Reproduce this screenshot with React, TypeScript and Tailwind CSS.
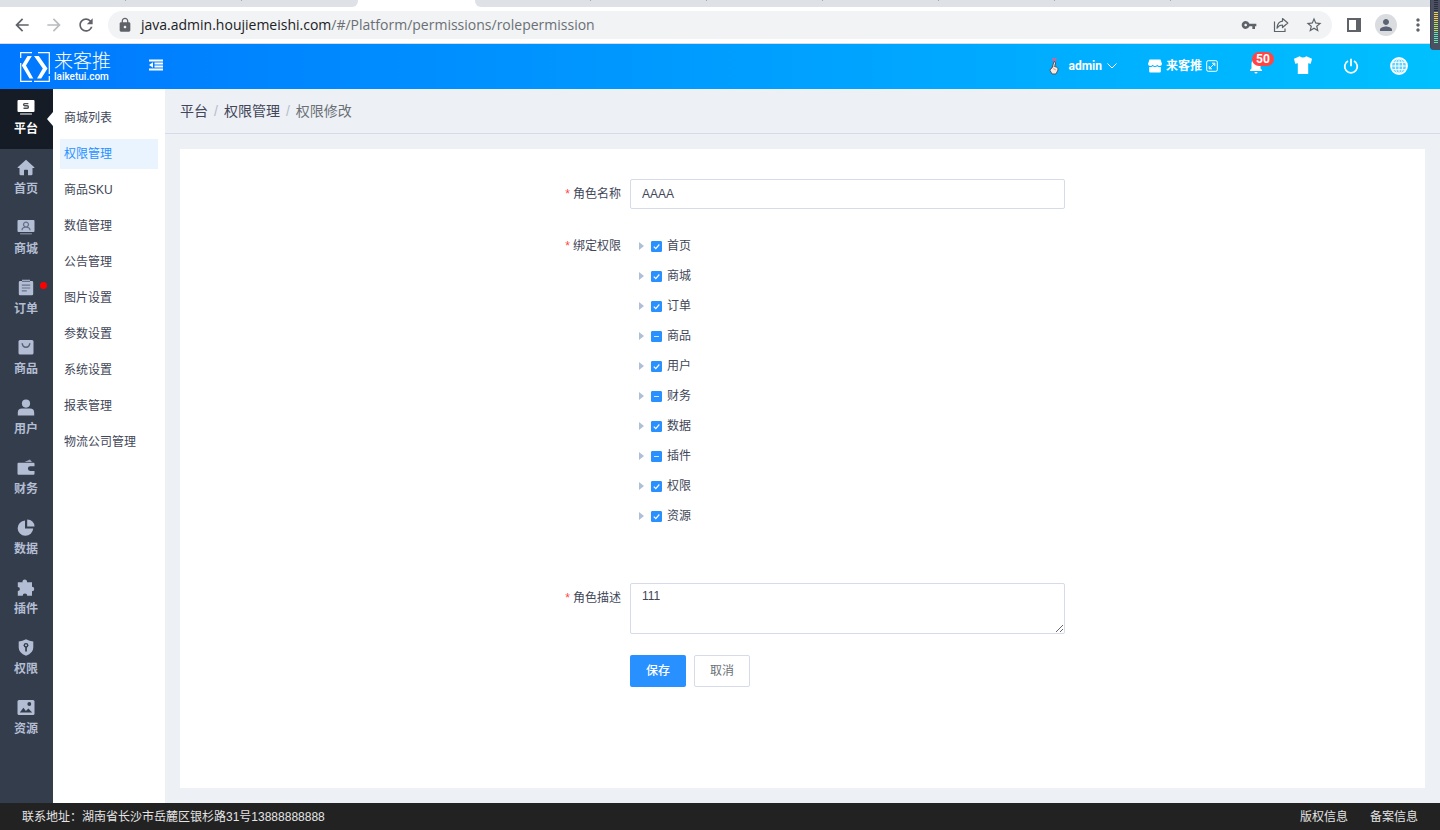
import { useEffect, useRef, useState } from "react";
import type { ReactNode } from "react";
import {
  MdArrowBack,
  MdArrowForward,
  MdLock,
  MdMoreVert,
  MdPerson,
  MdRefresh,
  MdStarBorder,
  MdVpnKey,
} from "react-icons/md";

type NavItem = { label: string; icon: ReactNode; dot?: boolean };

const hole = "fill-[#343d4c]";

const navItems: NavItem[] = [
  {
    label: "平台",
    icon: (
      <>
        <rect x="0.5" y="1" width="17" height="12" rx="1" />
        <rect x="3" y="14" width="12" height="2" rx="0.5" opacity="0.5" />
        <path
          d="M11.4 4.6H7.6q-1 0-1 1t1 1.1h2.6q1.2 0 1.2 1.2T10.2 9.200H6.500"
          fill="none"
          stroke="#4a4f57"
          strokeWidth="1.4"
        />
      </>
    ),
  },
  {
    label: "首页",
    icon: <path d="M9 .8 17.300 8.200q.5.8-.5.900H15.500V15q0 1.300-1.300 1.300H11V11.500q0-.8-.8-.8H7.800q-.8 0-.8.8v4.800H3.800Q2.500 16.300 2.500 15V9.100H1.200Q.2 9 .7 8.200Z" />,
  },
  {
    label: "商城",
    icon: (
      <>
        <rect x="0.5" y="1" width="17" height="12" rx="1" />
        <rect x="3" y="14" width="12" height="1.500" rx="0.5" opacity="0.5" />
        <path
          d="M5 11.200Q5.200 8.200 9 8.200t4 3M6.500 5.500a2.500 2.300 0 1 1 5 0a2.500 2.300 0 1 1-5 0"
          fill="none"
          stroke="#657086"
          strokeWidth="1.300"
        />
      </>
    ),
  },
  {
    label: "订单",
    dot: true,
    icon: (
      <>
        <path d="M3 2h2V.8h8V2h2q1.200 0 1.200 1.200V15q0 1.200-1.200 1.200H3Q1.800 16.200 1.800 15V3.200Q1.800 2 3 2Z" />
        <path d="M5 2.400h8M4.800 6.200h8.400M4.800 9h8.400M4.800 11.800h5" fill="none" stroke="#667188" strokeWidth="1.200" />
      </>
    ),
  },
  {
    label: "商品",
    icon: (
      <>
        <rect x="1.500" y="1" width="15" height="14.500" rx="1.500" />
        <path d="M5.200 4.200q.4 4 3.800 4t3.800-4" fill="none" stroke="#566075" strokeWidth="1.500" />
      </>
    ),
  },
  {
    label: "用户",
    icon: (
      <>
        <circle cx="9" cy="4.600" r="4.100" />
        <path d="M.8 16.500v-2.800Q.8 9.500 5 9.500h8q4.200 0 4.200 4.200v2.800Z" />
      </>
    ),
  },
  {
    label: "财务",
    icon: (
      <>
        <path d="M7.500 3 13 .5 15 3Z" opacity="0.8" />
        <path d="M1.500 3.700h15q1 0 1 1v2.600h-4.300a2.300 2.300 0 0 0 0 4.600h4.300v2.800q0 1-1 1h-15q-1 0-1-1v-10q0-1 1-1Z" />
      </>
    ),
  },
  {
    label: "数据",
    icon: (
      <>
        <path d="M8 1.500V9.500h8.200A7.800 7.600 0 1 1 8 1.500Z" />
        <path d="M10.200.5q6.800.4 7.300 6.900h-7.300Z" />
      </>
    ),
  },
  {
    label: "插件",
    icon: <path d="M.8 3.200h4.700a2.300 2.300 0 1 1 4.500 0h5v4.500a2.100 2.100 0 1 1 0 4.500v4.500h-4.800a2.200 2.200 0 1 0-4.500 0H.8v-4.600a2.100 2.100 0 1 0 0-4.200Z" />,
  },
  {
    label: "权限",
    icon: (
      <>
        <path d="M9 .3q3.500 2 7.300 2.200v6q0 5.500-7.300 8.300Q1.700 14 1.700 8.500v-6Q5.500 2.300 9 .3Z" />
        <circle cx="9" cy="6.300" r="2.400" className={hole} />
        <path d="M8.200 8h1.700v4.500H8.200Z" className={hole} />
        <circle cx="9" cy="6.300" r="1" />
      </>
    ),
  },
  {
    label: "资源",
    icon: (
      <>
        <rect x="0.500" y="1" width="17" height="15" rx="1.500" />
        <circle cx="12.300" cy="5" r="1.900" className={hole} />
        <path d="m2.800 13.500 3.600-4.800 2.500 3.300 2.500-2.500 3.800 4Z" className={hole} />
      </>
    ),
  },
];

const subMenu = [
  "商城列表",
  "权限管理",
  "商品SKU",
  "数值管理",
  "公告管理",
  "图片设置",
  "参数设置",
  "系统设置",
  "报表管理",
  "物流公司管理",
];

const permissions = [
  { label: "首页", partial: false },
  { label: "商城", partial: false },
  { label: "订单", partial: false },
  { label: "商品", partial: true },
  { label: "用户", partial: false },
  { label: "财务", partial: true },
  { label: "数据", partial: false },
  { label: "插件", partial: true },
  { label: "权限", partial: false },
  { label: "资源", partial: false },
];

function BrowserBar() {
  return (
    <div className="relative bg-white border-b border-[#dadce0]">
      <div className="flex h-[7px] overflow-hidden bg-white">
        <div className="flex w-[358px] shrink-0 rounded-br-md bg-[#dee1e6] pl-[10px]">
          {[0, 1, 2].map((i) => (
            <span key={i} className={`h-px w-[116px] ${i < 2 ? "border-r border-[#a5a9ae]" : ""}`} />
          ))}
        </div>
        <div className="w-[117px] shrink-0" />
        <div className="flex flex-1 rounded-bl-md bg-[#dee1e6]">
          {[0, 1, 2, 3, 4, 5].map((i) => (
            <span key={i} className="h-px w-[116px] border-r border-[#a5a9ae]" />
          ))}
        </div>
      </div>
      <div className="flex h-9 items-center pl-3 pr-4 text-[#5f6368]">
        <button aria-label="后退" className="mr-3"><MdArrowBack className="size-5" /></button>
        <button aria-label="前进" className="mr-3 text-[#babcbe]"><MdArrowForward className="size-5" /></button>
        <button aria-label="刷新" className="mr-3"><MdRefresh className="size-5" /></button>
        <div className="flex h-7 flex-1 items-center rounded-full bg-[#f1f3f4] px-[9px]">
          <MdLock className="mr-2 size-4" />
          <span className="flex-1 font-['Open_Sans',sans-serif] text-sm text-[#6b6f74]">
            <span className="text-[#202124]">java.admin.houjiemeishi.com</span>
            /#/Platform/permissions/rolepermission
          </span>
          <button aria-label="密码" className="mr-4"><MdVpnKey className="size-4" /></button>
          <button aria-label="分享" className="mr-4">
            <svg viewBox="0 0 16 16" className="size-4" fill="none" stroke="currentColor" strokeWidth="1.200">
              <path d="M1.500 4.500v10h10.500V11.500" />
              <path d="M9.500 1.500 14.800 6 9.500 10.500V8Q6 8 4 11.200 4.500 4.700 9.500 4.200Z" strokeLinejoin="round" />
            </svg>
          </button>
          <button aria-label="收藏"><MdStarBorder className="size-[18px]" /></button>
        </div>
        <button aria-label="侧边栏" className="ml-[15px] mr-[14px]">
          <svg viewBox="0 0 14 14" className="size-[14px]">
            <path d="M1 1h12v12H1Z" fill="none" stroke="currentColor" strokeWidth="2" />
            <path d="M9 0h5v14H9Z" fill="currentColor" />
          </svg>
        </button>
        <button aria-label="用户" className="mr-[11px] flex size-[22px] items-center justify-center rounded-full bg-[#dadce0] text-[#5a6375]">
          <MdPerson className="size-[18px]" />
        </button>
        <button aria-label="更多" className="-mr-1"><MdMoreVert className="size-5" /></button>
      </div>
      <div className="absolute right-0 top-0 z-20 flex h-[50px] w-[10px] flex-col items-end gap-px overflow-hidden rounded-bl border-l border-[#3f4453] bg-[#4b5163] pr-[2px]">
        {Array.from({ length: 22 }, (_, i) => (
          <span
            key={i}
            className={`h-px w-1 shrink-0 ${
              i < 6 ? "bg-[#2b2e3a]" : i < 11 ? "bg-[#f2cf47]" : i < 16 ? "bg-[#b5e05c]" : "bg-[#5fe6b0]"
            }`}
          />
        ))}
      </div>
    </div>
  );
}

function Logo() {
  return (
    <div className="flex items-center gap-1">
      <svg viewBox="0 0 30 30" className="size-[30px]" fill="none" stroke="white">
        <path d="M12 .7H.7V6M.7 11v18.300H12M14 29.300h15.300V24M29.300 22V.7H18" strokeWidth="1.200" />
        <path d="M11.800 4H7.500L1.800 13.500 9.500 26.500h3.800L6 13.500Z" fill="white" stroke="none" />
        <path d="M14 4h4.800l8.700 12.500-6.300 10H17l5.800-10Z" fill="white" stroke="none" />
      </svg>
      <div className="flex flex-col">
        <span className="text-[19px] font-light leading-5">来客推</span>
        <span className="font-['Roboto',sans-serif] text-[10px] font-medium leading-[10px]">laiketui.com</span>
      </div>
    </div>
  );
}

function Header() {
  return (
    <header className="flex h-[45px] items-center bg-gradient-to-r from-[#0077ff] to-[#00c0ff] pl-5 pr-8 text-white">
      <Logo />
      <button aria-label="折叠菜单" className="mb-1 ml-[38px]">
        <svg viewBox="0 0 14 12" className="h-3 w-[14px]" fill="currentColor">
          <path d="M0 .5h14v2H0ZM5.500 3.500H14v2H5.500ZM5.500 6.500H14v2H5.500ZM0 9.500h14v2H0ZM0 6l4-2.700v5.400Z" />
        </svg>
      </button>
      <div className="mb-px ml-auto flex items-center gap-[31px] font-['Roboto','Noto_Sans_CJK_SC',sans-serif] text-xs font-bold">
        <button className="flex items-center">
          <svg viewBox="0 0 12 18" className="mr-[9px] h-[18px] w-3">
            <path d="M4 1.500q1.500-1.500 2.500 0Q8 0 8.800 1.800 8.500 4 6.500 5 4 3.800 4 1.500Z" fill="#c06aa0" />
            <path d="M6 4.500q2 .2 1.500 2.500l-1 2.500q4 .5 3.500 3.500L8 17H4l-2-3.500q0-2 2-2.500Z" fill="#f7eade" stroke="#49586d" strokeWidth="1" />
            <path d="m5 11.500 3 1.500M5.500 10l1-3" stroke="#d39b7c" strokeWidth="0.800" />
          </svg>
          admin
          <svg viewBox="0 0 10 6" className="ml-[5px] h-[6px] w-[10px]" fill="none" stroke="currentColor">
            <path d="m.5.5 4.500 4.500L9.500.5" />
          </svg>
        </button>
        <a href="#/shop" className="flex items-center">
          <svg viewBox="0 0 14 14" className="mr-1 size-[14px]" fill="currentColor">
            <path d="M1.500.5h11L14 5q-.3 2-2.300 2Q10 7 9.300 5.700 8.500 7 7 7T4.700 5.700Q4 7 2.300 7 .3 7 0 5Z" />
            <path d="M1.200 8q2 .3 3.400-.8Q7 8.800 9.400 7.200q1.400 1.100 3.400.8v4.500q0 1-1 1H2.200q-1 0-1-1Z" />
          </svg>
          来客推
          <svg viewBox="0 0 12 12" className="ml-1 size-3" fill="none" stroke="currentColor">
            <rect x="0.700" y="0.700" width="10.600" height="10.600" rx="1.500" />
            <path d="M3.200 8.800 8.800 3.200M6 3.200h2.800V6M3.200 6v2.800H6" />
          </svg>
        </a>
        <button aria-label="消息" className="relative">
          <svg viewBox="0 0 14 16" className="h-4 w-[14px]" fill="currentColor">
            <path d="M7 1q4.500.5 4.500 5v4.500L13 12v1H1v-1l1.500-1.500V6Q2.500 1.500 7 1ZM5.500 14h3q0 1.500-1.500 1.500T5.500 14Z" />
          </svg>
          <span className="absolute -top-[6px] left-[3px] h-[14px] rounded-full bg-[#ff4645] px-1 text-xs leading-[14px]">50</span>
        </button>
        <button aria-label="主题">
          <svg viewBox="0 0 18 18" className="mb-[3px] size-[18px]" fill="currentColor">
            <path d="M5.700.3q3.300 2.500 6.600 0L18 2.800l-1.200 5-2.600-.5V18H3.800V7.300l-2.600.5L0 2.800Z" />
          </svg>
        </button>
        <button aria-label="退出">
          <svg viewBox="0 0 16 16" className="size-4" fill="none" stroke="currentColor" strokeWidth="1.800">
            <path d="M5 3A6.300 6.300 0 1 0 11 3M8 .8v7.400" />
          </svg>
        </button>
        <button aria-label="语言">
          <svg viewBox="0 0 18 18" className="size-[18px]" fill="none" stroke="white">
            <circle cx="9" cy="9" r="8" fill="#5fd2ff" strokeWidth="1.800" />
            <ellipse cx="9" cy="9" rx="3.800" ry="7.500" />
            <path d="M9 1v16M1.500 9h15M2.800 5.300h12.400M2.800 12.700h12.400" />
          </svg>
        </button>
      </div>
    </header>
  );
}

function Sidebar() {
  return (
    <nav className="w-[53px] shrink-0 bg-[#343d4c]">
      {navItems.map((item, i) => (
        <a
          key={item.label}
          href={`#/${i}`}
          className={`relative flex h-[60px] flex-col items-center gap-1 pr-px pt-[10px] text-xs font-bold leading-[18px] ${
            i === 0 ? "bg-[#161c25] text-white" : "text-[#b3bdd3]"
          }`}
        >
          <svg viewBox="0 0 18 17" className="h-[17px] w-[18px]" fill="currentColor">
            {item.icon}
          </svg>
          {item.label}
          {item.dot && <span className="absolute right-[6px] top-[13px] size-[7px] rounded-full bg-[#ff0000]" />}
          {i === 0 && (
            <svg viewBox="0 0 6 14" className="absolute right-0 top-[23px] h-[14px] w-[6px]" fill="white">
              <path d="M6 0v14L0 7Z" />
            </svg>
          )}
        </a>
      ))}
    </nav>
  );
}

function PermissionRow({ label, partial }: { label: string; partial: boolean }) {
  const [checked, setChecked] = useState(!partial);
  const [mixed, setMixed] = useState(partial);
  const ref = useRef<HTMLInputElement>(null);

  useEffect(() => {
    if (ref.current) ref.current.indeterminate = mixed;
  }, [mixed]);

  return (
    <li className="flex h-[30px] items-center pl-[9px]">
      <button type="button" aria-label={`展开${label}`} className="mr-[7px]">
        <svg viewBox="0 0 5 8" className="h-2 w-[5px]" fill="#b0bfd8">
          <path d="M0 0 5 4 0 8Z" />
        </svg>
      </button>
      <label className="flex items-center gap-[5px]">
        <span className="grid size-[11px]">
          <input
            ref={ref}
            type="checkbox"
            checked={checked}
            onChange={(e) => {
              setMixed(false);
              setChecked(e.target.checked);
            }}
            className="col-start-1 row-start-1 size-[11px] appearance-none rounded-[1px] border border-[#d5dbe8] checked:border-[#2890ff] checked:bg-[#2890ff] indeterminate:border-[#2890ff] indeterminate:bg-[#2890ff]"
          />
          <svg viewBox="0 0 11 11" className="pointer-events-none col-start-1 row-start-1 size-[11px]" fill="none" stroke="white">
            {mixed ? <path d="M3 5.500h5" opacity="0.8" /> : checked && <path d="m2.800 5.700 2 2L8.300 3.500" strokeWidth="1.200" />}
          </svg>
        </span>
        {label}
      </label>
    </li>
  );
}

const labelClass = "w-[90px] shrink-0 pr-[9px] text-right leading-[30px]";

function Star() {
  return <span className="mr-[3px] text-[#ff4645]">*</span>;
}

function RoleForm() {
  return (
    <form className="mx-auto w-full max-w-[525px] pt-[30px]" onSubmit={(e) => e.preventDefault()}>
      <div className="flex">
        <label htmlFor="role-name" className={labelClass}><Star />角色名称</label>
        <input
          id="role-name"
          defaultValue="AAAA"
          className="h-[30px] min-w-0 flex-1 rounded-[2px] border border-[#d5dbe8] px-[11px] outline-none"
        />
      </div>
      <div className="mt-[22px] flex">
        <span id="role-perms" className={labelClass}><Star />绑定权限</span>
        <ul aria-labelledby="role-perms">
          {permissions.map((p) => (
            <PermissionRow key={p.label} {...p} />
          ))}
        </ul>
      </div>
      <div className="mt-[52px] flex">
        <label htmlFor="role-desc" className={labelClass}><Star />角色描述</label>
        <textarea
          id="role-desc"
          defaultValue="111"
          className="h-[51px] min-w-0 flex-1 rounded-[2px] border border-[#d5dbe8] px-[11px] py-[3px] leading-[18px] outline-none"
        />
      </div>
      <div className="mt-[21px] flex gap-2 pl-[90px]">
        <button type="submit" className="h-8 w-14 rounded-[2px] bg-[#2890ff] font-medium text-white">保存</button>
        <button type="button" className="h-8 w-14 rounded-[2px] border border-[#d5dbe8] text-[#6a7076]">取消</button>
      </div>
    </form>
  );
}

export default function App() {
  return (
    <div className="flex min-h-screen flex-col bg-[#edf0f5] font-['Liberation_Sans','Noto_Sans_CJK_SC',sans-serif] text-xs text-[#414658]">
      <BrowserBar />
      <Header />
      <div className="flex flex-1">
        <Sidebar />
        <nav className="flex w-28 shrink-0 flex-col gap-[6px] bg-white px-[7px] pt-[14px]">
          {subMenu.map((item) => (
            <a
              key={item}
              href={`#/Platform/${item}`}
              className={`h-[30px] pl-1 leading-[30px] ${item === "权限管理" ? "bg-[#e9f4ff] text-[#2890ff]" : ""}`}
            >
              {item}
            </a>
          ))}
        </nav>
        <div className="flex min-w-0 flex-1 flex-col">
          <div className="flex h-[45px] items-center gap-[6px] border-b border-[#d5dbe8] px-[15px] text-sm">
            <span>平台</span>
            <span className="text-[#b5bdcc]">/</span>
            <a href="#/Platform/permissions">权限管理</a>
            <span className="text-[#b5bdcc]">/</span>
            <span className="text-[#6a7076]">权限修改</span>
          </div>
          <main className="m-[15px] flex-1 bg-white">
            <RoleForm />
          </main>
        </div>
      </div>
      <footer className="flex h-[27px] items-center gap-[22px] bg-[#222222] px-[22px] pt-px text-[#e4e4e4]">
        <span className="mr-auto">联系地址：湖南省长沙市岳麓区银杉路31号13888888888</span>
        <a href="#/copyright">版权信息</a>
        <a href="#/record">备案信息</a>
      </footer>
    </div>
  );
}
